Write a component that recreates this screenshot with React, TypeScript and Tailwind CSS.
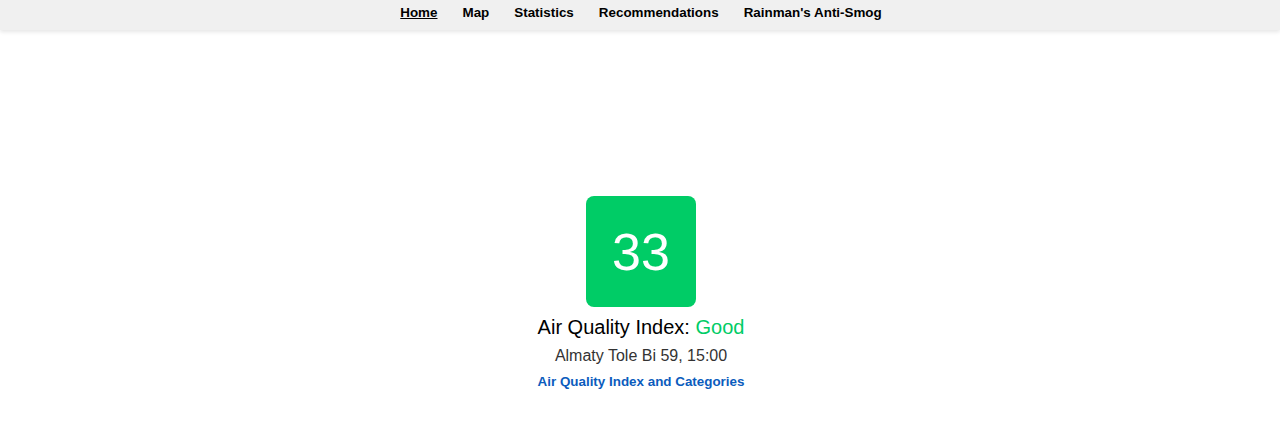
const links = ["Home", "Map", "Statistics", "Recommendations", "Rainman's Anti-Smog"];

const App = () => {
    return (
        <div className="min-h-screen bg-white font-['Liberation_Sans',Arial,sans-serif]">
            <nav className="h-[30px] bg-[#f0f0f0] shadow-[0_2px_4px_rgba(0,0,0,0.1)] flex justify-center items-start pt-[5px] gap-[25px] pl-[2px]">
                {links.map((l, i) => (
                    <a key={l} href="#" className={`text-[13.4px] leading-[15px] font-bold text-black ${i === 0 ? "underline" : ""}`}>
                        {l}
                    </a>
                ))}
            </nav>
            <main className="flex flex-col items-center pt-[166px] pl-[2px]">
                <div className="w-[110px] h-[111px] rounded-[8px] bg-[#00cc66] flex items-center justify-center">
                    <span className="text-white text-[52px] leading-none">33</span>
                </div>
                <div className="mt-[9px] text-[20px] leading-[23px] text-black">
                    Air Quality Index: <span className="text-[#00cc66]">Good</span>
                </div>
                <div className="mt-2 text-[16px] leading-[18px] text-[#333]">Almaty Tole Bi 59, 15:00</div>
                <a href="#" className="mt-[9px] text-[13.4px] leading-[16px] font-bold text-[#0b5cbd]">
                    Air Quality Index and Categories
                </a>
            </main>
        </div>
    );
};

export default App;
